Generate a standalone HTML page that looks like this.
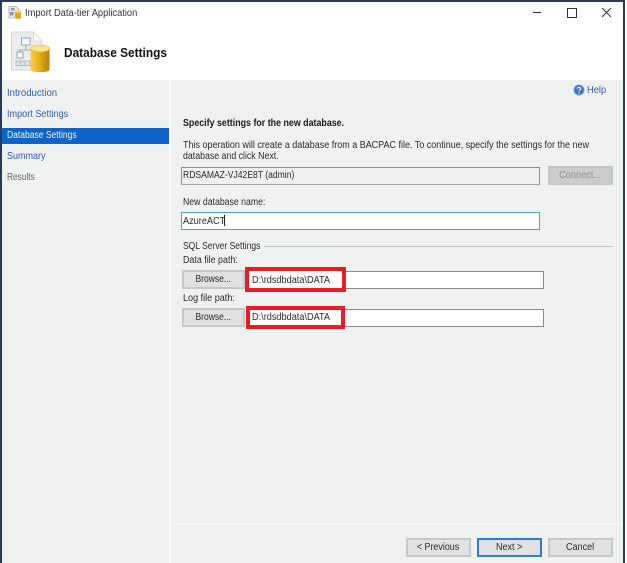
<!DOCTYPE html>
<html><head><meta charset="utf-8">
<style>
html,body{margin:0;padding:0;background:#fff}
body{width:627px;height:563px;overflow:hidden;position:relative;font-family:"Liberation Sans",sans-serif;font-size:9.7px;color:#2a2a2a}
#w{position:absolute;left:0;top:0;width:627px;height:563px;filter:blur(.3px)}
.a{position:absolute}
.t{position:absolute;white-space:nowrap;line-height:12px;transform-origin:0 50%}
.box{position:absolute;box-sizing:border-box;background:#fff}
.btn{position:absolute;box-sizing:border-box;background:#e1e1e1;border:2px solid #c8c8c8;text-align:center;white-space:nowrap;line-height:16px}
.btn span{display:inline-block}
.lnk{color:#2f5fb8}
</style></head><body>
<div id="w">
<!-- window borders -->
<div class="a" style="left:0;top:0;width:624.500px;height:2px;background:#2b3a55"></div>
<div class="a" style="left:0;top:0;width:2px;height:563px;background:#2b3a55"></div>
<div class="a" style="left:623px;top:0;width:1.500px;height:563px;background:#2b3a55"></div>
<div class="a" style="left:2px;top:2px;width:621px;height:78px;background:#fff"></div>
<div class="a" style="left:2px;top:80px;width:621px;height:483px;background:#f0f1f1"></div>
<div class="a" style="left:169px;top:80px;width:2px;height:483px;background:#fbfbfb"></div>
<div class="a" style="left:171px;top:523px;width:452px;height:1px;background:#fbfbfb"></div>

<!-- title icon -->
<svg class="a" style="left:8px;top:6px" width="14" height="13" viewBox="0 0 14 13">
<path d="M1 .5h7l3 3v8.500H1z" fill="#e8e8e8" stroke="#a8a8a8" stroke-width=".8"/>
<rect x="3" y="2" width="3.500" height="2.500" fill="#7f9bbd"/>
<rect x="2" y="6" width="3.500" height="3.500" fill="#8797ab"/>
<path d="M7 5.500c0-1 6-1 6 0v6.500c0 1-6 1-6 0z" fill="#e0a818"/>
<ellipse cx="10" cy="5.500" rx="3" ry="1" fill="#f7df8a"/>
</svg>
<div class="t" style="left:24.500px;top:7.500px;font-size:9.800px;transform:scaleX(.95);color:#333">Import Data-tier Application</div>

<!-- window buttons -->
<div class="a" style="left:533px;top:12px;width:8px;height:1px;background:#333"></div>
<div class="a" style="left:567px;top:8px;width:8px;height:8px;border:1px solid #333"></div>
<svg class="a" style="left:601px;top:7px" width="11" height="11" viewBox="0 0 11 11"><path d="M1 1l9 9M10 1l-9 9" stroke="#333" stroke-width="1" fill="none"/></svg>

<!-- header icon -->
<svg class="a" style="left:10px;top:30px" width="42" height="44" viewBox="0 0 42 44">
<path d="M1.500 2h22l8 9v29h-30z" fill="#ececec" stroke="#d4d4d4"/>
<path d="M23.500 2v9h8z" fill="#fafafa" stroke="#d4d4d4" stroke-width=".7"/>
<rect x="11.500" y="8" width="8.500" height="7" fill="#f5f7fa" stroke="#98a6b8"/>
<path d="M16 15v5M9 20h16M9 20v2" stroke="#98a6b8" fill="none"/>
<rect x="7" y="22" width="6" height="6" fill="#f5f7fa" stroke="#98a6b8"/>
<rect x="6" y="31" width="14" height="4.500" fill="#dfe3e8" stroke="#a5afbc" stroke-width=".8"/>
<path d="M10.500 31v4.500M15 31v4.500" stroke="#a5afbc" stroke-width=".8"/>
<defs><linearGradient id="g" x1="0" x2="1" y1="0" y2="0"><stop offset="0" stop-color="#f4cf4c"/><stop offset=".35" stop-color="#edb81f"/><stop offset="1" stop-color="#b98108"/></linearGradient></defs>
<path d="M20.500 18.500v21c0 3.500 19 3.500 19 0v-21z" fill="url(#g)"/>
<ellipse cx="30" cy="18.500" rx="9.500" ry="3.500" fill="#f6e58d" stroke="#dcae2b" stroke-width=".6"/>
</svg>
<div class="t" style="left:63.500px;top:46px;font-size:12.500px;transform:scaleX(.95);font-weight:bold;color:#111;line-height:14px">Database Settings</div>

<!-- nav -->
<div class="a" style="left:2px;top:127.500px;width:167px;height:16.500px;background:#0f62c8"></div>
<div class="t lnk" style="left:7px;top:87.500px;transform:scaleX(.99)">Introduction</div>
<div class="t lnk" style="left:7px;top:108.500px;transform:scaleX(.94)">Import Settings</div>
<div class="t" style="left:7px;top:130px;color:#f2f6fc;transform:scaleX(.88)">Database Settings</div>
<div class="t lnk" style="left:7px;top:151px;transform:scaleX(.93)">Summary</div>
<div class="t" style="left:7px;top:172px;color:#666;transform:scaleX(.86)">Results</div>

<!-- help -->
<svg class="a" style="left:573px;top:84px" width="12" height="12" viewBox="0 0 12 12"><circle cx="6" cy="6" r="5.300" fill="#3f76c4" stroke="#a8c0e4" stroke-width=".8"/><path d="M4.400 4.700c.2-1.700 3.300-1.600 3.300.1 0 1.200-1.600 1.200-1.600 2.300" stroke="#fff" stroke-width="1.100" fill="none"/><circle cx="6.100" cy="8.900" r=".7" fill="#fff"/></svg>
<div class="t lnk" style="left:587px;top:84.500px;transform:scaleX(.96)">Help</div>

<!-- content -->
<div class="t" style="left:183px;top:117.500px;font-weight:bold;color:#1a1a1a;transform:scaleX(.915)">Specify settings for the new database.</div>
<div class="t" style="left:183px;top:140px;transform:scaleX(.927)">This operation will create a database from a BACPAC file. To continue, specify the settings for the new</div>
<div class="t" style="left:183px;top:151px;transform:scaleX(.906)">database and click Next.</div>

<div class="box" style="left:181px;top:167px;width:359px;height:18px;background:#f0f0f0;border:1px solid #8f8f8f;border-bottom-color:#a5a5a5"></div>
<div class="t" style="left:183px;top:170px;transform:scaleX(.885)">RDSAMAZ-VJ42E8T (admin)</div>
<div class="btn" style="left:548px;top:166px;width:65px;height:19px;background:#cccccc;border-color:#c6c6c6;color:#8f8f8f"><span style="transform:scaleX(.95)">Connect...</span></div>

<div class="t" style="left:183px;top:196.500px;transform:scaleX(.9)">New database name:</div>
<div class="box" style="left:181px;top:212px;width:359px;height:18px;border:1px solid #4d9ddd"></div>
<div class="t" style="left:183px;top:215.500px;transform:scaleX(.945)">AzureACT</div>
<div class="a" style="left:224px;top:215px;width:1px;height:11px;background:#222"></div>

<div class="t" style="left:183px;top:241px;transform:scaleX(.88)">SQL Server Settings</div>
<div class="a" style="left:264px;top:245.500px;width:349px;height:1px;background:#c4c4c4"></div>
<div class="t" style="left:183px;top:255px;transform:scaleX(.917)">Data file path:</div>
<div class="btn" style="left:182px;top:270px;width:63px;height:19px"><span style="transform:scaleX(.875)">Browse...</span></div>
<div class="box" style="left:247px;top:271px;width:297px;height:18px;border:1px solid #8a8a8a"></div>
<div class="a" style="left:245px;top:267px;width:101px;height:25px;box-sizing:border-box;border:4.500px solid #ed1c24;background:#fff"></div>
<div class="t" style="left:252px;top:274.500px;transform:scaleX(.945)">D:\rdsdbdata\DATA</div>

<div class="t" style="left:183px;top:293px;transform:scaleX(.934)">Log file path:</div>
<div class="btn" style="left:182px;top:308px;width:63px;height:19px"><span style="transform:scaleX(.875)">Browse...</span></div>
<div class="box" style="left:247px;top:309px;width:297px;height:18px;border:1px solid #8a8a8a"></div>
<div class="a" style="left:246px;top:306px;width:99px;height:22.500px;box-sizing:border-box;border:4.500px solid #ed1c24;background:#fff"></div>
<div class="t" style="left:252px;top:312px;transform:scaleX(.945)">D:\rdsdbdata\DATA</div>

<!-- footer -->
<div class="btn" style="left:406px;top:538px;width:65px;height:19px"><span style="transform:scaleX(.92)">&lt; Previous</span></div>
<div class="btn" style="left:477px;top:538px;width:65px;height:19px;border-color:#2f7fd0"><span style="transform:scaleX(.93)">Next &gt;</span></div>
<div class="btn" style="left:548px;top:538px;width:65px;height:19px"><span style="transform:scaleX(.93)">Cancel</span></div>
</div>
</body></html>
